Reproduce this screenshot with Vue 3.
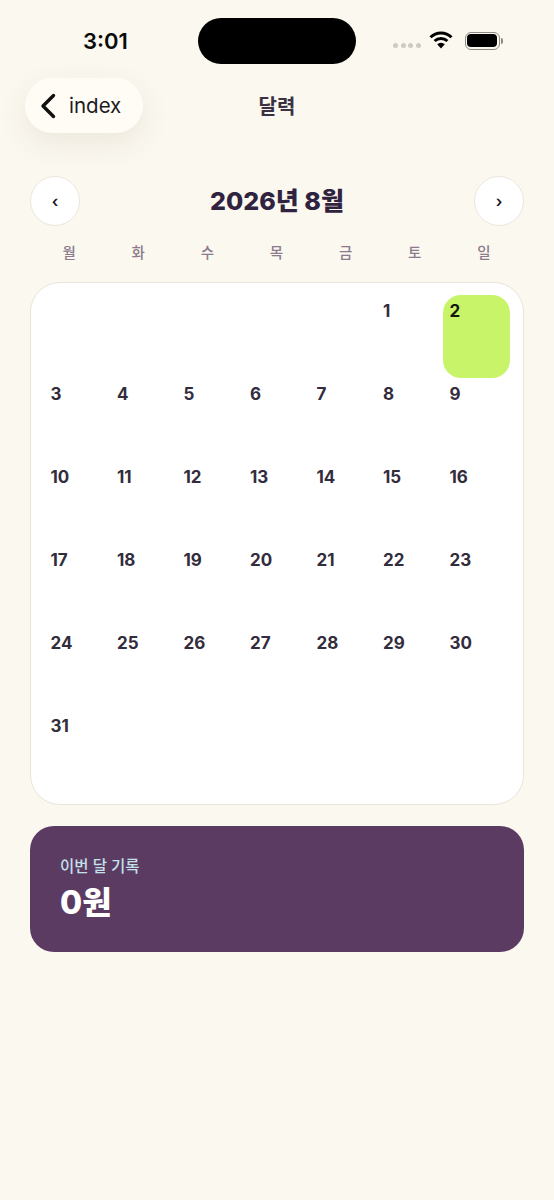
<script setup>
const weekdays = ['월', '화', '수', '목', '금', '토', '일']
const blanks = [1, 2, 3, 4, 5]
const days = Array.from({ length: 31 }, (_, i) => i + 1)
</script>

<template>
  <div class="page">
    <header class="status">
      <span class="time">3:01</span>
      <div class="island"></div>
      <div class="status-right">
        <div class="dots"><i></i><i></i><i></i><i></i></div>
        <svg class="wifi" width="24" height="18" viewBox="0 0 24 18">
          <path d="M1.5 6.2 A15 15 0 0 1 22.5 6.2" fill="none" stroke="#000" stroke-width="3" />
          <path d="M5.6 10 A9.2 9.2 0 0 1 18.4 10" fill="none" stroke="#000" stroke-width="3" />
          <path d="M12 17.5 L8.2 13.3 A5.2 5.2 0 0 1 15.8 13.3 Z" fill="#000" />
        </svg>
        <div class="battery"><div class="battery-fill"></div></div>
        <div class="battery-cap"></div>
      </div>
    </header>

    <nav class="nav">
      <button class="back">
        <svg width="16" height="26" viewBox="0 0 16 26">
          <path d="M13.5 2.5 L3 13 L13.5 23.5" fill="none" stroke="#111" stroke-width="3.4" stroke-linecap="round" stroke-linejoin="round" />
        </svg>
        <span>index</span>
      </button>
      <h1 class="nav-title">달력</h1>
    </nav>

    <main class="content">
      <section class="month">
        <button class="round">‹</button>
        <h2 class="month-title">2026년 8월</h2>
        <button class="round">›</button>
      </section>

      <div class="weekdays">
        <span v-for="w in weekdays" :key="w">{{ w }}</span>
      </div>

      <section class="calendar">
        <div v-for="b in blanks" :key="'b' + b" class="cell"></div>
        <div v-for="d in days" :key="d" class="cell" :class="{ today: d === 2 }">{{ d }}</div>
      </section>

      <section class="summary">
        <div class="summary-label">이번 달 기록</div>
        <div class="summary-value">0원</div>
      </section>
    </main>
  </div>
</template>

<style>
html, body { margin: 0; background: #fbf8ef; }
</style>

<style scoped>
.page {
  width: 554px;
  height: 1200px;
  overflow: hidden;
  background: #fbf8ef;
  font-family: Inter, "Noto Sans CJK KR", sans-serif;
  color: #2f2340;
}
.status {
  height: 64px;
  padding: 18px 0 0 83px;
  box-sizing: border-box;
  display: flex;
  align-items: flex-start;
}
.time {
  width: 115px;
  height: 46px;
  line-height: 46px;
  font-size: 22px;
  font-weight: 600;
  color: #0b0b0b;
}
.island {
  width: 158px;
  height: 46px;
  border-radius: 23px;
  background: #000;
}
.status-right {
  display: flex;
  align-items: center;
  height: 46px;
  margin-left: 37px;
}
.dots {
  display: flex;
  gap: 2.5px;
  margin-top: 9px;
  margin-right: 8px;
}
.dots i {
  width: 5px;
  height: 5px;
  border-radius: 50%;
  background: #cfcbc4;
}
.wifi { margin-right: 12px; margin-top: -2px; }
.battery {
  width: 35px;
  height: 18px;
  border: 1.5px solid #8d8a85;
  border-radius: 6px;
  padding: 1.5px;
  box-sizing: border-box;
  margin-top: -1px;
}
.battery-fill {
  width: 100%;
  height: 100%;
  background: #000;
  border-radius: 4px;
}
.battery-cap {
  width: 2px;
  height: 6px;
  margin-left: 1px;
  margin-top: -1px;
  background: #8d8a85;
  border-radius: 0 2px 2px 0;
}
.nav {
  position: relative;
  height: 55px;
  margin-top: 14px;
  padding-left: 25px;
  display: flex;
  align-items: center;
}
.back {
  width: 118px;
  height: 55px;
  padding: 0 0 0 15px;
  border: 0;
  border-radius: 28px;
  background: #fffcf6;
  box-shadow: 0 10px 30px rgba(90, 70, 50, 0.09);
  display: flex;
  align-items: center;
  gap: 13px;
  font-family: inherit;
  font-size: 20.5px;
  color: #1b1b1f;
}
.nav-title {
  position: absolute;
  left: 0;
  right: 0;
  top: 14px;
  margin: 0;
  line-height: 30px;
  text-align: center;
  font-size: 20px;
  font-weight: 600;
  color: #3a3242;
}
.content {
  padding: 43px 30px 0;
}
.month {
  display: flex;
  justify-content: space-between;
  align-items: center;
}
.round {
  width: 50px;
  height: 50px;
  padding: 0;
  border: 1px solid #ece6dd;
  border-radius: 50%;
  background: #fff;
  font-family: inherit;
  font-size: 16px;
  font-weight: 600;
  color: #1d1826;
}
.month-title {
  margin: -4px 0 0;
  font-size: 25px;
  font-weight: 800;
  color: #2f2340;
}
.weekdays {
  display: grid;
  grid-template-columns: repeat(7, 1fr);
  padding: 0 5.5px 0 4.5px;
  margin-top: 16px;
  height: 22px;
  line-height: 22px;
  text-align: center;
  font-size: 14.5px;
  font-weight: 500;
  color: #8b7b8c;
}
.calendar {
  margin-top: 18px;
  box-sizing: border-box;
  height: 523px;
  padding: 12px 13.5px 12px 13px;
  border: 1px solid #eae4d9;
  border-radius: 30px;
  background: #fff;
  display: grid;
  grid-template-columns: repeat(7, 1fr);
  grid-auto-rows: 83px;
}
.cell {
  padding: 6px 6.5px;
  font-size: 17px;
  line-height: 21px;
  font-weight: 700;
  color: #332c3c;
}
.today {
  background: #c8f469;
  border-radius: 18px;
  color: #14170f;
}
.summary {
  margin: 21px 0 0;
  height: 126px;
  padding: 30px 30px;
  box-sizing: border-box;
  border-radius: 24px;
  background: #5c3b63;
}
.summary-label {
  font-size: 15.5px;
  line-height: 22px;
  font-weight: 500;
  color: #c3e2ea;
}
.summary-value {
  margin-top: 5px;
  font-size: 32px;
  line-height: 40px;
  font-weight: 800;
  color: #fff;
}
</style>
